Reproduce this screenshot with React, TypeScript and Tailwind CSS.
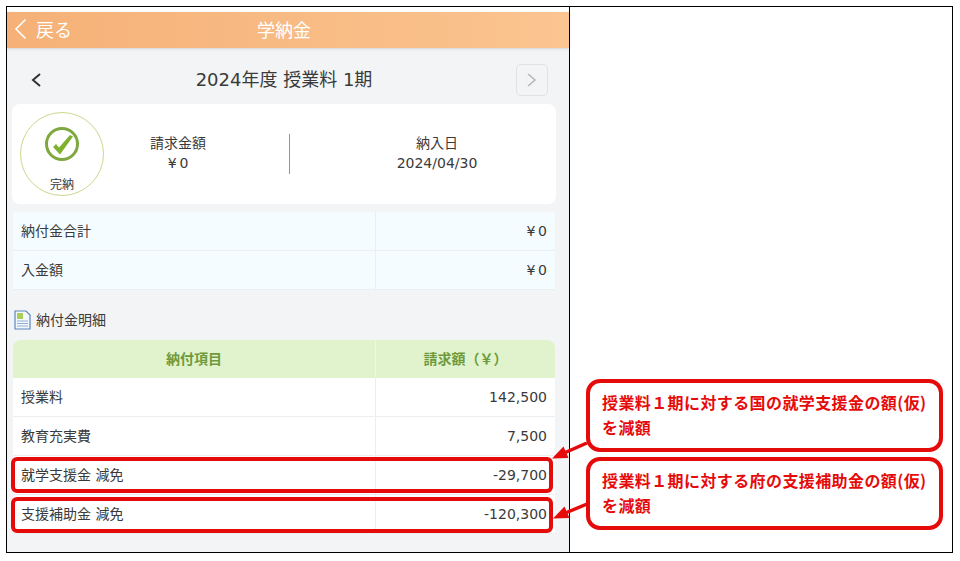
const summary = [
  { label: "納付金合計", value: "¥\u20090" },
  { label: "入金額", value: "¥\u20090" },
]

const details = [
  { label: "授業料", value: "142,500", ring: "" },
  { label: "教育充実費", value: "7,500", ring: "" },
  { label: "就学支援金 減免", value: "-29,700", ring: "left-[-2px] right-[2px] top-[1px] bottom-[1px]" },
  { label: "支援補助金 減免", value: "-120,300", ring: "left-[-2px] right-[2px] top-[2px] bottom-[0px]" },
]

const notes = [
  ["授業料１期に対する国の就学支援金の額(仮)", "を減額"],
  ["授業料１期に対する府の支援補助金の額(仮)", "を減額"],
]

function BackArrow() {
  return (
    <svg width="13" height="22" viewBox="0 0 13 22" fill="none">
      <path d="M11.5 1.5L2 11l9.5 9.5" stroke="#fff" strokeWidth="1.6" />
    </svg>
  )
}

function Chevron({ flip, color, width }: { flip?: boolean; color: string; width: number }) {
  return (
    <svg width="12" height="16" viewBox="0 0 12 16" fill="none" className={flip ? "rotate-180" : ""}>
      <path d="M10 2L3 8l7 6" stroke={color} strokeWidth={width} />
    </svg>
  )
}

function CheckMark() {
  return (
    <svg width="36" height="36" viewBox="0 0 36 36" fill="none">
      <circle cx="18" cy="18" r="15.5" stroke="#7fa83f" strokeWidth="3" />
      <path d="M9 21l3-3 3 3.5L26 9l3 1.5L16 28.5z" fill="#7fb02e" />
    </svg>
  )
}

function DocIcon() {
  return (
    <svg width="17" height="20" viewBox="0 0 17 20" fill="none">
      <path d="M1 1h11l4 4v14H1z" fill="#f4f8fc" stroke="#5b86bd" strokeWidth="1.2" />
      <rect x="3" y="3" width="6" height="6" fill="#a9cf5a" />
      <path d="M3 11h11M3 13.5h11M3 16h11" stroke="#8fb0d6" strokeWidth="1.2" />
    </svg>
  )
}

export default function App() {
  return (
    <div className="min-h-screen bg-white pl-[6px] pt-[6px] font-['DejaVu_Sans','Noto_Sans_CJK_JP',sans-serif] text-[14px] leading-[20px] text-[#3a3a3a]">
      <div className="relative flex h-[547px] w-[947px] border border-black">
        {/* left: phone screen */}
        <div className="flex w-[563px] flex-col border-r border-black bg-white pt-[5px]">
          <div className="flex h-full flex-col bg-[#f2f4f6]">
            <header className="relative flex h-[36px] shrink-0 items-center justify-center bg-gradient-to-r from-[#f5b177] to-[#fbc490] pb-[3px] pr-[8px] text-white shadow-sm">
              <div className="absolute left-[7px] top-[6px] flex items-center gap-[9px]">
                <BackArrow />
                <span className="font-['Noto_Sans_CJK_JP'] text-[18px]">戻る</span>
              </div>
              <span className="font-['Noto_Sans_CJK_JP'] text-[18px]">学納金</span>
            </header>

            <div className="flex h-[56px] shrink-0 items-center justify-between pl-[23px] pr-[21px] pt-[8px]">
              <Chevron color="#333" width={2} />
              <span className="pl-[10px] text-[18px]">2024年度 授業料 1期</span>
              <div className="flex h-[32px] w-[32px] items-center justify-center rounded-[5px] border border-[#dfe1e3]">
                <Chevron flip color="#b5b5b5" width={1.5} />
              </div>
            </div>

            <div className="ml-[5px] mr-[13px] flex h-[100px] shrink-0 items-center rounded-[8px] bg-white pl-[8px]">
              <div className="flex h-[84px] w-[84px] shrink-0 flex-col items-center rounded-full border border-[#c9d98f] pt-[13px]">
                <CheckMark />
                <span className="mt-[15px] text-[12px] leading-[16px]">完納</span>
              </div>
              <div className="flex w-[185px] flex-col items-center pb-[2px] pr-[37px]">
                <span>請求金額</span>
                <span>¥{"\u2009"}0</span>
              </div>
              <div className="h-[40px] w-px shrink-0 bg-[#8fa84a]" />
              <div className="flex flex-1 flex-col items-center pb-[2px] pl-[28px]">
                <span>納入日</span>
                <span>2024/04/30</span>
              </div>
            </div>

            <div className="ml-[6px] mr-[14px] mt-[8px] shrink-0 bg-[#f5fcff]">
              {summary.map((row) => (
                <div key={row.label} className="flex h-[39px] items-center border-b border-[#eceff1]">
                  <div className="flex h-full w-[363px] items-center border-r border-[#eceff1] pl-[8px]">{row.label}</div>
                  <div className="flex-1 pr-[8px] text-right">{row.value}</div>
                </div>
              ))}
            </div>

            <div className="mx-[7px] mt-[18px] flex h-[24px] shrink-0 items-center gap-[5px]">
              <DocIcon />
              <span>納付金明細</span>
            </div>

            <div className="ml-[6px] mr-[14px] mt-[8px] shrink-0">
              <div className="flex h-[38px] items-center rounded-t-[8px] bg-[#e1f3cd] pb-[1px] font-bold text-[#6f9a3c]">
                <div className="flex h-full w-[363px] items-center justify-center border-r border-[#eef6e4]">納付項目</div>
                <div className="flex-1 text-center">請求額（￥）</div>
              </div>
              {details.map((row) => (
                <div key={row.label} className="relative flex h-[39px] items-center border-b border-[#eceff1] bg-white">
                  <div className="flex h-full w-[363px] items-center border-r border-[#eceff1] pl-[8px]">{row.label}</div>
                  <div className="flex-1 pr-[8px] text-right">{row.value}</div>
                  {row.ring && <div className={`absolute rounded-[6px] border-[4px] border-[#e60b0b] ${row.ring}`} />}
                </div>
              ))}
            </div>
          </div>
        </div>

        {/* right: notes */}
        <div className="flex flex-1 flex-col gap-[5px] pl-[16px] pt-[372px]">
          {notes.map((lines) => (
            <div
              key={lines[0]}
              className="flex h-[73px] w-[357px] flex-col justify-center gap-[1px] rounded-[14px] border-[4px] border-[#e60b0b] bg-white pb-[2px] pl-[12px] font-['Noto_Sans_CJK_JP'] text-[16px] font-bold leading-[24px] tracking-[0.4px] text-[#e60b0b]"
            >
              {lines.map((line) => (
                <span key={line}>{line}</span>
              ))}
            </div>
          ))}
        </div>

        {/* arrows */}
        <svg className="absolute left-[540px] top-[435px]" width="48" height="90" viewBox="0 0 48 90" fill="none">
          <path d="M40 1L16 11.5" stroke="#e60b0b" strokeWidth="3.5" />
          <path d="M5 16.5l11.5-12 5 11.5z" fill="#e60b0b" />
          <path d="M40 62L16 72" stroke="#e60b0b" strokeWidth="3.5" />
          <path d="M6 76.5l11.5-12 5 11.5z" fill="#e60b0b" />
        </svg>
      </div>
    </div>
  )
}
